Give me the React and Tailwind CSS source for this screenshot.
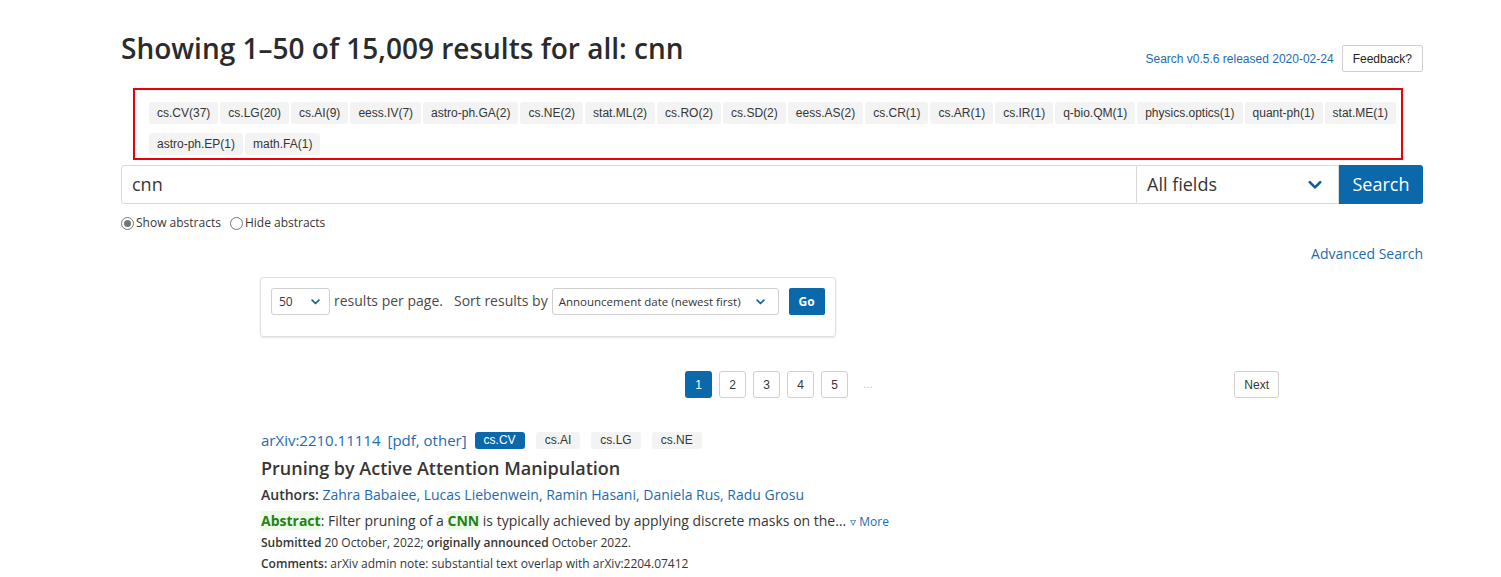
import { useState } from 'react'

const facets = [
    'cs.CV(37)', 'cs.LG(20)', 'cs.AI(9)', 'eess.IV(7)', 'astro-ph.GA(2)', 'cs.NE(2)', 'stat.ML(2)',
    'cs.RO(2)', 'cs.SD(2)', 'eess.AS(2)', 'cs.CR(1)', 'cs.AR(1)', 'cs.IR(1)', 'q-bio.QM(1)',
    'physics.optics(1)', 'quant-ph(1)', 'stat.ME(1)', 'astro-ph.EP(1)', 'math.FA(1)',
]

const Chevron = ({ className }) => (
    <svg viewBox="0 0 12 8" className={className} fill="none" stroke="currentColor" strokeWidth="2.2" strokeLinecap="round" strokeLinejoin="round">
        <path d="M1.5 1.5 6 6l4.5-4.5" />
    </svg>
)

export default function App() {
    const [showAbs, setShowAbs] = useState(true)

    return (
        <div className="min-h-screen bg-white text-[#363636] font-['Open_Sans',sans-serif]">
            <div className="w-[1302px] ml-[121px] pt-[30px]">
                {/* Header */}
                <div className="flex items-start justify-between">
                    <h1 className="text-[28px] leading-[36px] font-semibold text-[#2b2b2b]">Showing 1–50 of 15,009 results for all: cnn</h1>
                    <div className="flex items-center gap-[8px] mt-[15px] font-['Liberation_Sans',sans-serif]">
                        <a className="text-[12px] text-[#1d6bb0]">Search v0.5.6 released 2020-02-24</a>
                        <button className="h-[27px] px-[10px] border border-[#cfcfcf] rounded-[2px] text-[12px] text-[#222] bg-white">Feedback?</button>
                    </div>
                </div>

                {/* Facets */}
                <div className="ml-[12px] mt-[16px] w-[1270px] h-[72px] border-2 border-[#e8000b] pl-[14px] pr-[2px] pt-[12px] font-['Liberation_Sans',sans-serif]">
                    <div className="flex flex-wrap gap-x-[2px] gap-y-[9px]">
                        {facets.map((f) => (
                            <span key={f} className="h-[22px] px-[8px] flex items-center bg-[#f3f3f3] rounded-[3px] text-[12px] text-[#363636]">{f}</span>
                        ))}
                    </div>
                </div>

                {/* Search bar */}
                <div className="flex mt-[5px] h-[39px]">
                    <div className="flex-1 border border-[#d9d9d9] rounded-l-[3px] flex items-center px-[10px] text-[18px] text-[#363636]">cnn</div>
                    <div className="w-[202px] border border-l-0 border-[#d9d9d9] flex items-center justify-between pl-[10px] pr-[16px] text-[18px] text-[#363636]">
                        <span>All fields</span>
                        <Chevron className="w-[14px] h-[10px] text-[#0b5f9e]" />
                    </div>
                    <button className="w-[84px] bg-[#0b68ab] text-white text-[18px] rounded-r-[3px]">Search</button>
                </div>

                <div className="flex items-center mt-[10px] text-[12px] text-[#363636]">
                    <label className="flex items-center gap-[2px] mr-[9px]" onClick={() => setShowAbs(true)}>
                        <span className="w-[13px] h-[13px] rounded-full border border-[#767676] flex items-center justify-center">
                            {showAbs && <span className="w-[7px] h-[7px] rounded-full bg-[#767676]" />}
                        </span>
                        Show abstracts
                    </label>
                    <label className="flex items-center gap-[2px]" onClick={() => setShowAbs(false)}>
                        <span className="w-[13px] h-[13px] rounded-full border border-[#767676] flex items-center justify-center">
                            {!showAbs && <span className="w-[7px] h-[7px] rounded-full bg-[#767676]" />}
                        </span>
                        Hide abstracts
                    </label>
                </div>

                <div className="flex justify-end mt-[11px]">
                    <a className="text-[14px] text-[#1d6bb0]">Advanced Search</a>
                </div>

                {/* Results options */}
                <div className="ml-[139px] mt-[13px] w-[576px] h-[60px] border border-[#e0e0e0] rounded-[3px] shadow-[0_1px_2px_rgba(0,0,0,0.1)] px-[10px] pt-[10px]">
                    <div className="flex items-center h-[27px] text-[14px] text-[#4a4a4a]">
                        <div className="w-[59px] h-[27px] border border-[#d0d0d0] rounded-[3px] flex items-center justify-between pl-[7px] pr-[9px] text-[12px] text-[#363636]">
                            <span>50</span>
                            <Chevron className="w-[9px] h-[6px] text-[#0b5f9e]" />
                        </div>
                        <span className="ml-[4px] -mt-[3px]">results per page.</span>
                        <span className="ml-[11px] -mt-[3px]">Sort results by</span>
                        <div className="ml-[4px] w-[227px] h-[27px] border border-[#d0d0d0] rounded-[3px] flex items-center justify-between pl-[6px] pr-[13px] text-[11.5px] text-[#363636]">
                            <span>Announcement date (newest first)</span>
                            <Chevron className="w-[9px] h-[6px] text-[#0b5f9e]" />
                        </div>
                        <button className="ml-[10px] w-[36px] h-[27px] bg-[#0b68ab] text-white text-[12px] font-bold rounded-[2px]">Go</button>
                    </div>
                </div>

                {/* Pagination */}
                <div className="ml-[564px] mt-[34px] w-[594px] flex items-center justify-between font-['Liberation_Sans',sans-serif] text-[12px]">
                    <div className="flex items-center gap-[7px]">
                        <span className="w-[27px] h-[27px] rounded-[3px] bg-[#0b68ab] text-white flex items-center justify-center">1</span>
                        {['2', '3', '4', '5'].map((n) => (
                            <span key={n} className="w-[27px] h-[27px] rounded-[3px] border border-[#d0d0d0] text-[#363636] flex items-center justify-center">{n}</span>
                        ))}
                        <span className="ml-[8px] text-[#b5b5b5] text-[10px]">…</span>
                    </div>
                    <span className="h-[27px] px-[9px] rounded-[3px] border border-[#d0d0d0] text-[#363636] flex items-center">Next</span>
                </div>

                {/* Result */}
                <div className="ml-[140px] mt-[32px]">
                    <div className="flex items-center">
                        <a className="text-[15px] text-[#1d6bb0] leading-[20px]">arXiv:2210.11114</a>
                        <span className="ml-[7px] text-[15px] text-[#1d6bb0] leading-[20px]">[pdf, other]</span>
                        <div className="flex items-center gap-[11px] ml-[8px] font-['Liberation_Sans',sans-serif] text-[12px]">
                            <span className="h-[17px] px-[9px] rounded-[3px] bg-[#0b68ab] text-white flex items-center">cs.CV</span>
                            <span className="h-[17px] px-[9px] rounded-[3px] bg-[#f3f3f3] text-[#363636] flex items-center">cs.AI</span>
                            <span className="h-[17px] px-[9px] rounded-[3px] bg-[#f3f3f3] text-[#363636] flex items-center">cs.LG</span>
                            <span className="h-[17px] px-[9px] rounded-[3px] bg-[#f3f3f3] text-[#363636] flex items-center">cs.NE</span>
                        </div>
                    </div>
                    <p className="mt-[6px] text-[18px] leading-[24px] font-semibold text-[#363636]">Pruning by Active Attention Manipulation</p>
                    <p className="mt-[5px] text-[14px] leading-[20px]">
                        <span className="font-semibold">Authors: </span>
                        <span className="text-[#1d6bb0]">Zahra Babaiee, Lucas Liebenwein, Ramin Hasani, Daniela Rus, Radu Grosu</span>
                    </p>
                    <p className="mt-[6px] text-[14px] leading-[20px]">
                        <span className="font-bold text-[#257f1c] bg-[#ecfbe6]">Abstract</span>: Filter pruning of a{' '}
                        <span className="font-bold text-[#257f1c] bg-[#ecfbe6]">CNN</span> is typically achieved by applying discrete masks on the…
                        <span className="text-[#1d6bb0] text-[12px] ml-[4px]">▿ More</span>
                    </p>
                    <p className="mt-[1px] text-[12px] leading-[20px]">
                        <span className="font-semibold">Submitted</span> 20 October, 2022; <span className="font-semibold">originally announced</span> October 2022.
                    </p>
                    <p className="mt-[1px] text-[12px] leading-[20px]">
                        <span className="font-semibold">Comments:</span> arXiv admin note: substantial text overlap with arXiv:2204.07412
                    </p>
                </div>
            </div>
        </div>
    )
}
